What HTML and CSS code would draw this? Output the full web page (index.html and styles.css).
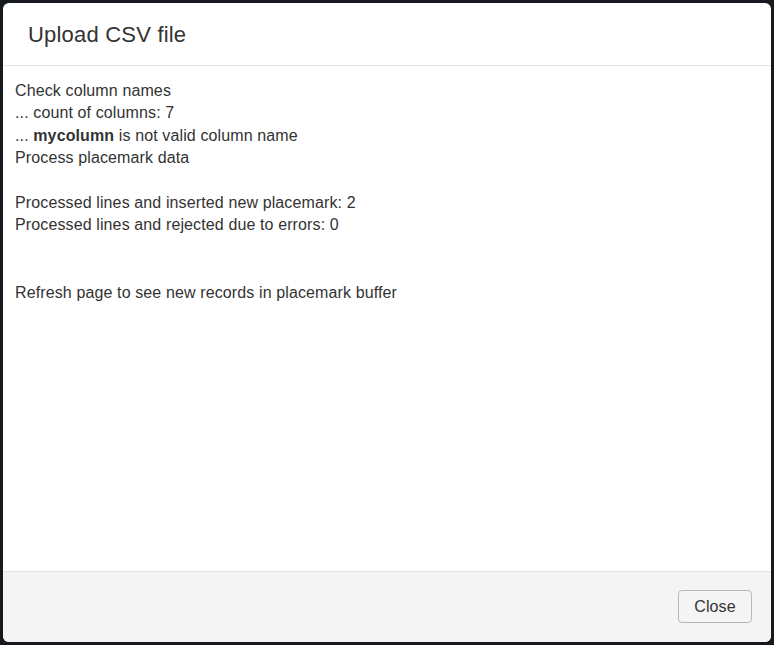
FILE: index.html
```html
<!DOCTYPE html>
<html>
<head>
<meta charset="utf-8">
<link rel="stylesheet" href="styles.css">
</head>
<body>
<div class="modal">
  <div class="modal-header">
    <h4 class="modal-title">Upload CSV file</h4>
  </div>
  <div class="modal-body">
    Check column names<br>
    ... count of columns: 7<br>
    ... <b>mycolumn</b> is not valid column name<br>
    Process placemark data<br>
    <br>
    Processed lines and inserted new placemark: 2<br>
    Processed lines and rejected due to errors: 0<br>
    <br>
    <br>
    Refresh page to see new records in placemark buffer
  </div>
  <div class="modal-footer">
    <button class="btn" type="button">Close</button>
  </div>
</div>
</body>
</html>
```

FILE: styles.css
```css
html, body {
  margin: 0;
  height: 100%;
}
body {
  background: #161a1e;
  padding: 3px 3px 3px 3px;
  box-sizing: border-box;
  font-family: "Liberation Sans", Arial, sans-serif;
  color: #333;
}
.modal {
  width: 768px;
  height: 639px;
  background: #fff;
  border-radius: 6px;
  display: flex;
  flex-direction: column;
  overflow: hidden;
}
.modal-header {
  padding: 20px 25px 18px 25px;
  border-bottom: 1px solid #e5e5e5;
}
.modal-title {
  margin: 0;
  font-size: 22px;
  font-weight: normal;
  line-height: 24px;
  letter-spacing: 0.2px;
  color: #333;
}
.modal-body {
  flex: 1;
  padding: 14px 12px 12px 12px;
  font-size: 16px;
  line-height: 22.4px;
  letter-spacing: 0.12px;
}
.modal-body b {
  font-weight: bold;
}
.modal-footer {
  background: #f4f4f4;
  border-top: 1px solid #e2e2e2;
  padding: 18px 19px 19px 19px;
  display: flex;
  justify-content: flex-end;
}
.btn {
  font-family: "Liberation Sans", Arial, sans-serif;
  font-size: 16px;
  line-height: 19px;
  padding: 6px 0;
  color: #333;
  background: #f5f5f5;
  border: 1px solid #b8b8b8;
  border-radius: 4px;
  width: 74px;
  height: 33px;
  box-sizing: border-box;
  letter-spacing: 0.12px;
}
```
